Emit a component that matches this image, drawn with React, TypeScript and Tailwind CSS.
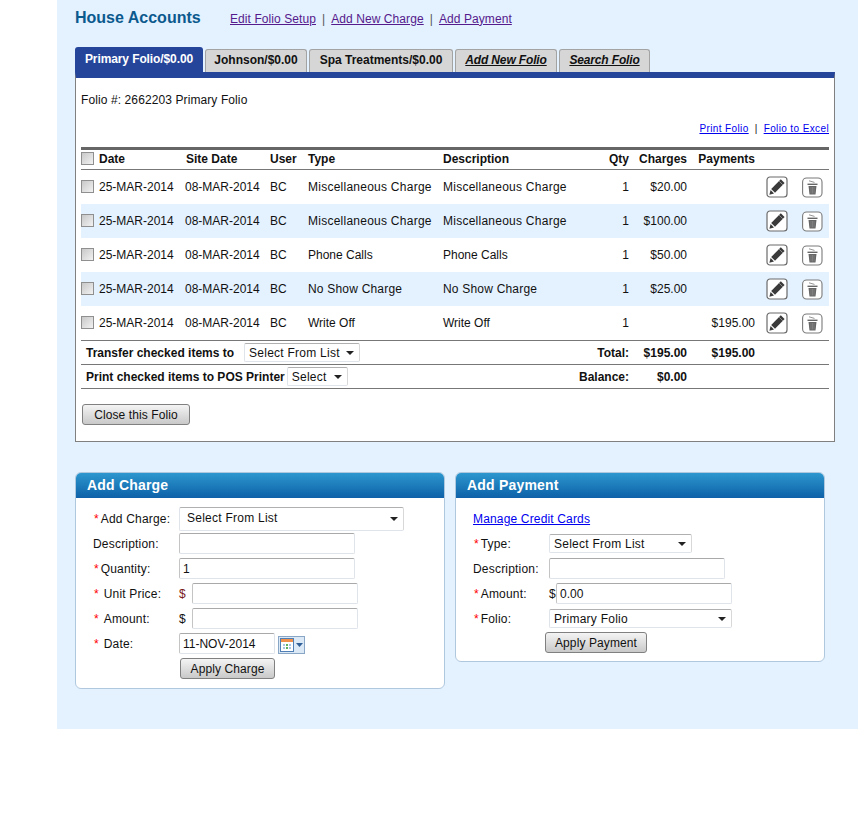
import React from "react";

const rows = [
  ["Miscellaneous Charge", "Miscellaneous Charge", "$20.00", ""],
  ["Miscellaneous Charge", "Miscellaneous Charge", "$100.00", ""],
  ["Phone Calls", "Phone Calls", "$50.00", ""],
  ["No Show Charge", "No Show Charge", "$25.00", ""],
  ["Write Off", "Write Off", "", "$195.00"],
];

const gridCols = "grid grid-cols-[18px_86px_85px_38px_135px_150px_36px_58px_68px_74px] items-center";

function Check() {
  return <input type="checkbox" className="appearance-none block w-[13px] h-[13px] border border-[#8f8f8f] bg-gradient-to-br from-[#c8c8c8] to-[#f2f2f2] m-0 -mt-[1px]" />;
}

function Arrow() {
  return (
    <svg width="8" height="4" viewBox="0 0 8 4" className="block shrink-0">
      <path d="M0 0H8L4 4Z" fill="#222" />
    </svg>
  );
}

function EditIcon() {
  return (
    <svg width="22" height="22" viewBox="0 0 22 22" className="block">
      <rect x="1" y="1" width="20" height="20" rx="3" fill="#fff" stroke="#6a6a6a" strokeWidth="1.2" />
      <path d="M14.8 3.2 L18.6 7 L9 16.8 L5.2 13 Z" fill="#3a3a3a" />
      <path d="M4.6 14 L8 17.4 L3.4 18.8 Z" fill="#3a3a3a" />
      <path d="M13.2 5.2 L16.8 8.8" stroke="#ddd" strokeWidth="0.5" />
    </svg>
  );
}

function TrashIcon() {
  return (
    <svg width="22" height="22" viewBox="0 0 22 22" className="block">
      <rect x="1.6" y="2" width="19.4" height="19" rx="4" fill="#fff" stroke="#7a7a7a" strokeWidth="1.1" />
      <path d="M6.5 7.6H16.5V9H6.5Z" fill="#666" />
      <path d="M7.5 10H15.5L14.5 18.4H8.5Z" fill="#666" />
      <path d="M8 4.8 L13.5 6.4" stroke="#888" strokeWidth="0.9" />
      <path d="M10 11V17.5M11.5 11V17.5M13 11V17.5" stroke="#999" strokeWidth="0.5" />
    </svg>
  );
}

function Tab({ label, w, active, link }: { label: string; w: string; active?: boolean; link?: boolean }) {
  if (active) {
    return (
      <div className={`h-[25px] ${w} bg-[#25459b] rounded-t-[3px] text-white font-bold tracking-[-0.1px] flex items-center justify-center pb-[1px]`}>
        {label}
      </div>
    );
  }
  return (
    <div className={`h-[23px] ${w} pb-[2px] bg-[#d6d6d6] border border-b-0 border-[#a3a3a3] rounded-t-[3px] font-bold text-[#111] flex items-center justify-center ${link ? "italic underline tracking-[-0.15px]" : ""}`}>
      {label}
    </div>
  );
}

function Star() {
  return <span className="text-[#f00] ml-[1px] mr-[2px]">*</span>;
}

function Input({ w, value }: { w: string; value?: string }) {
  return (
    <div className={`${w} h-[21px] bg-white border border-[#dfe3ea] border-t-[#a9a9a9] border-l-[#c4c4c4] rounded-[2px] px-[3px] flex items-center text-[#111]`}>
      {value}
    </div>
  );
}

function Select({ w, h, label, pl, lift }: { w: string; h: string; label: string; pl: string; lift?: boolean }) {
  return (
    <div className={`${w} ${h} ${pl} bg-white border border-[#dfe3ea] border-t-[#b0b0b0] border-r-[#d8d8d8] rounded-[2px] pr-[5px] flex items-center justify-between text-[#111]`}>
      <span className={`tracking-[0.25px] ${lift ? "-mt-[2px]" : ""}`}>{label}</span>
      <Arrow />
    </div>
  );
}

function Button({ w, label }: { w: string; label: string }) {
  return (
    <div className={`${w} h-[21px] rounded-[3px] border border-[#808080] bg-gradient-to-b from-[#f4f4f4] to-[#c9c9c9] flex items-center justify-center text-[#111] tracking-[0.1px]`}>
      {label}
    </div>
  );
}

function Card({ title, children, className }: { title: string; children: React.ReactNode; className: string }) {
  return (
    <div className={`w-[370px] bg-white border border-[#b0c8de] rounded-[6px] overflow-hidden ${className}`}>
      <div className="h-[25px] pb-[2px] bg-gradient-to-b from-[#2d97ce] to-[#0e61a8] text-white font-bold text-[14px] tracking-[0.2px] pl-[11px] flex items-center">
        {title}
      </div>
      {children}
    </div>
  );
}

function Label({ w, star, gap, children }: { w: string; star?: boolean; gap?: boolean; children: React.ReactNode }) {
  return (
    <div className={`${w} shrink-0 flex items-center text-[#111]`}>
      {star && <Star />}
      {gap && <span className="w-[3px]" />}
      <span className="tracking-[0.2px]">{children}</span>
    </div>
  );
}

function typeTracking(s: string) {
  if (s === "Miscellaneous Charge") return "tracking-[0.25px]";
  if (s === "No Show Charge") return "tracking-[0.2px]";
  return "";
}

export default function App() {
  return (
    <div className="w-[858px] h-[827px] bg-white text-[12px] leading-[14px] text-[#111] overflow-hidden" style={{ fontFamily: '"Liberation Sans", Arial, sans-serif' }}>
      <div className="ml-[57px] h-[729px] bg-[#e4f1ff] pl-[18px]">
        <div className="flex items-center h-[47px] pb-[10px]">
          <h1 className="w-[155px] text-[16px] font-bold text-[#0b5a8e] leading-[20px] -mt-[2px]">House Accounts</h1>
          <div className="flex gap-[6px] text-[#555] tracking-[0.08px]">
            <a className="text-[#551a8b] underline">Edit Folio Setup</a>
            <span>|</span>
            <a className="text-[#551a8b] underline">Add New Charge</a>
            <span>|</span>
            <a className="text-[#551a8b] underline">Add Payment</a>
          </div>
        </div>

        <div className="flex items-end gap-[2px] h-[25px]">
          <Tab w="w-[128px]" label="Primary Folio/$0.00" active />
          <Tab w="w-[102px]" label="Johnson/$0.00" />
          <Tab w="w-[144px]" label="Spa Treatments/$0.00" />
          <Tab w="w-[102px]" label="Add New Folio" link />
          <Tab w="w-[91px]" label="Search Folio" link />
        </div>

        <div className="w-[760px] h-[370px] bg-white border-t-[6px] border-t-[#25459b] border-x border-b border-x-[#808080] border-b-[#808080] px-[5px]">
          <div className="pt-[15px] h-[36px] tracking-[0.1px]">Folio #: 2662203 Primary Folio</div>
          <div className="h-[33px] flex justify-end items-start gap-[6px] text-[10px] leading-[12px] pt-[9px] tracking-[0.38px]">
            <a className="text-[#00e] underline">Print Folio</a>
            <span>|</span>
            <a className="text-[#00e] underline">Folio to Excel</a>
          </div>

          <div className={`${gridCols} h-[23px] pb-[2px] border-t-[3px] border-t-[#666] border-b border-b-[#777] font-bold`}>
            <Check />
            <div>Date</div>
            <div className="pl-[1px]">Site Date</div>
            <div>User</div>
            <div>Type</div>
            <div>Description</div>
            <div className="text-right">Qty</div>
            <div className="text-right">Charges</div>
            <div className="text-right">Payments</div>
            <div />
          </div>

          {rows.map((r, i) => (
            <div key={i} className={`${gridCols} h-[34px] ${i % 2 === 1 ? "bg-[#e4f1ff]" : "bg-white"}`}>
              <Check />
              <div>25-MAR-2014</div>
              <div>08-MAR-2014</div>
              <div>BC</div>
              <div className={typeTracking(r[0])}>{r[0]}</div>
              <div className={typeTracking(r[1])}>{r[1]}</div>
              <div className="text-right">1</div>
              <div className="text-right">{r[2]}</div>
              <div className="text-right">{r[3]}</div>
              <div className="flex items-center pl-[11px] gap-[13px]">
                <EditIcon />
                <TrashIcon />
              </div>
            </div>
          ))}

          <div className={`${gridCols} h-[24px] border-t border-t-[#777] font-bold`}>
            <div className="col-span-6 pl-[5px] flex items-center gap-[10px]">
              <span>Transfer checked items to</span>
              <div className="font-normal"><Select w="w-[116px]" h="h-[19px]" pl="pl-[4px]" label="Select From List" /></div>
            </div>
            <div className="justify-self-end whitespace-nowrap">Total:</div>
            <div className="text-right">$195.00</div>
            <div className="text-right">$195.00</div>
            <div />
          </div>
          <div className={`${gridCols} h-[25px] border-y border-y-[#777] font-bold`}>
            <div className="col-span-6 pl-[5px] flex items-center gap-[2px]">
              <span>Print checked items to POS Printer</span>
              <div className="font-normal"><Select w="w-[61px]" h="h-[19px]" pl="pl-[4px]" label="Select" /></div>
            </div>
            <div className="justify-self-end whitespace-nowrap">Balance:</div>
            <div className="text-right">$0.00</div>
            <div />
            <div />
          </div>

          <div className="pt-[15px] pl-[1px]">
            <Button w="w-[108px]" label="Close this Folio" />
          </div>
        </div>

        <div className="flex gap-[10px] items-start mt-[30px]">
          <Card title="Add Charge" className="h-[217px]">
            <div className="pl-[17px] pt-[9px] flex flex-col">
              <div className="flex items-center h-[24px]">
                <Label w="w-[86px]" star>Add Charge:</Label>
                <Select w="w-[225px]" h="h-[24px]" pl="pl-[7px]" label="Select From List" lift />
              </div>
              <div className="flex items-center h-[21px] mt-[2px]">
                <Label w="w-[86px]">Description:</Label>
                <Input w="w-[176px]" />
              </div>
              <div className="flex items-center h-[21px] mt-[4px]">
                <Label w="w-[86px]" star>Quantity:</Label>
                <Input w="w-[176px]" value="1" />
              </div>
              <div className="flex items-center h-[21px] mt-[4px]">
                <Label w="w-[86px]" star gap>Unit Price:</Label>
                <span className="w-[13px] text-[#7a1a1a]">$</span>
                <Input w="w-[166px]" />
              </div>
              <div className="flex items-center h-[21px] mt-[4px]">
                <Label w="w-[86px]" star gap>Amount:</Label>
                <span className="w-[13px]">$</span>
                <Input w="w-[166px]" />
              </div>
              <div className="flex items-center h-[21px] mt-[4px]">
                <Label w="w-[86px]" star gap>Date:</Label>
                <Input w="w-[96px]" value="11-NOV-2014" />
                <div className="ml-[3px] mt-[3px] w-[27px] h-[18px] bg-[#dbe8f6] border border-[#8aa6c6] flex items-center justify-start pl-[1px] gap-[2px]">
                  <svg width="14" height="14" viewBox="0 0 14 14" className="block">
                    <rect x="0.5" y="0.5" width="13" height="13" fill="#fff" stroke="#4f7fb5" />
                    <rect x="1" y="1" width="12" height="3" fill="#f0904a" />
                    <path d="M3 6h2v2H3zM9 6h2v2H9zM3 9h2v2H3z" fill="#a9c4e4" />
                    <path d="M6 6h2v2H6zM6 9h2v2H6z" fill="#5fb35f" />
                    <path d="M9 9h2v2H9z" fill="#a9c4e4" />
                  </svg>
                  <svg width="7" height="4" viewBox="0 0 7 4" className="block"><path d="M0 0H7L3.5 4Z" fill="#2f5f96" /></svg>
                </div>
              </div>
              <div className="pl-[87px] mt-[4px]">
                <Button w="w-[95px]" label="Apply Charge" />
              </div>
            </div>
          </Card>

          <Card title="Add Payment" className="h-[190px]">
            <div className="pl-[17px] pt-[14px] flex flex-col">
              <a className="text-[#00e] underline h-[14px] tracking-[0.16px]">Manage Credit Cards</a>
              <div className="flex items-center h-[19px] mt-[8px]">
                <Label w="w-[76px]" star>Type:</Label>
                <Select w="w-[143px]" h="h-[19px]" pl="pl-[4px]" label="Select From List" />
              </div>
              <div className="flex items-center h-[21px] mt-[5px]">
                <Label w="w-[76px]">Description:</Label>
                <Input w="w-[176px]" />
              </div>
              <div className="flex items-center h-[21px] mt-[4px]">
                <Label w="w-[76px]" star>Amount:</Label>
                <span className="w-[7px]">$</span>
                <Input w="w-[176px]" value="0.00" />
              </div>
              <div className="flex items-center h-[19px] mt-[5px]">
                <Label w="w-[76px]" star>Folio:</Label>
                <Select w="w-[183px]" h="h-[19px]" pl="pl-[4px]" label="Primary Folio" />
              </div>
              <div className="pl-[72px] mt-[4px]">
                <Button w="w-[102px]" label="Apply Payment" />
              </div>
            </div>
          </Card>
        </div>
      </div>
    </div>
  );
}
